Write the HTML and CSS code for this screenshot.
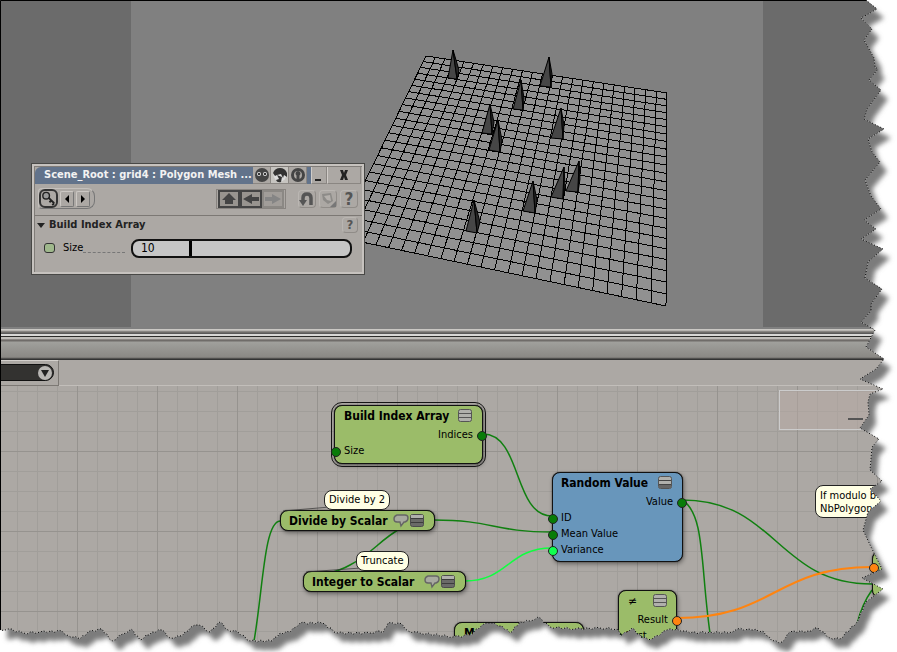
FILE: index.html
```html
<!DOCTYPE html>
<html lang="en">
<head>
<meta charset="utf-8">
<title>Scene_Root : grid4 : Polygon Mesh</title>
<link rel="stylesheet" href="styles.css">
</head>
<body>
<svg width="0" height="0" class="defs" aria-hidden="true">
  <symbol id="list" viewBox="0 0 16 14"><rect x="1.500" y=".5" width="13" height="12" rx="2" fill="#b0b0ac" stroke="#555"/><path d="M2 4.500h12M2 8.500h12" stroke="#555"/></symbol>
  <symbol id="list-dark" viewBox="0 0 16 14"><rect x="1.500" y=".5" width="13" height="12" rx="2" fill="#b0b0ac" stroke="#555"/><path d="M2 9h12v3H2z" fill="#666"/><path d="M2 4.500h12M2 8.500h12" stroke="#444"/></symbol>
  <symbol id="list-half" viewBox="0 0 16 14"><rect x="1.500" y=".5" width="13" height="12" rx="2" fill="#6a6a68" stroke="#4c4c4c"/><path d="M2 1h12v3H2z" fill="#b0b0ac"/><path d="M2 4.500h12M2 8.500h12" stroke="#3c3c3c"/></symbol>
  <symbol id="bubble" viewBox="0 0 16 14"><path d="M4 1h8q3 0 3 3t-3 4h-1l-3 4-1-4H4Q1 8 1 5t3-4z" fill="#a8aaa0" stroke="#666" stroke-width="1.400"/></symbol>
</svg>
<main class="workspace">
  <section class="viewport" aria-label="Camera view">
    <div class="camera"></div>
    <svg class="scene" id="scene" aria-hidden="true"></svg>
    <section class="panel">
      <header class="titlebar">
        <h1>Scene_Root : grid4 : Polygon Mesh ...</h1>
        <button class="tb" aria-label="Focus"><svg viewBox="0 0 18 16"><circle cx="9" cy="8" r="7" fill="#444"/><circle cx="6" cy="7" r="2" fill="#ddd"/><circle cx="12" cy="7" r="2" fill="#ddd"/><circle cx="6" cy="7" r="1"/><circle cx="12" cy="7" r="1"/></svg></button>
        <button class="tb lit" aria-label="Recycle"><svg viewBox="0 0 18 16"><circle cx="9" cy="8" r="6.500" fill="#ddd"/><path d="M2 6Q4 1 9 1q5 0 7 5v4l-3-2-1 3-2-4-4 1-2 1z" fill="#333"/><path d="M6 8l5 2-1 5q-4 1-5-2l3-1z" fill="#333"/></svg></button>
        <button class="tb" aria-label="Lock"><svg viewBox="0 0 18 16"><circle cx="9" cy="8" r="5.500" fill="none" stroke="#444" stroke-width="3"/><path d="M9 4a2.500 2.500 0 0 1 1.500 4.500V12h-3V8.500A2.500 2.500 0 0 1 9 4z" fill="#444"/></svg></button>
        <button class="tb min" aria-label="Minimize"><svg viewBox="0 0 16 16"><path d="M4 12h6v2H4z" fill="#222"/></svg></button>
        <button class="tb close" aria-label="Close"><svg viewBox="0 0 16 16"><path d="M4 3h3l1 3 1-3h3l-2 5 2 5H9l-1-3-1 3H4l2-5z" fill="#222"/></svg></button>
      </header>
      <div class="tools">
        <div class="keys">
          <button class="key" aria-label="Key"><svg viewBox="0 0 18 18"><circle cx="6.500" cy="6" r="3.500" fill="#999" stroke="#222" stroke-width="1.500"/><path d="M9 8l6 6M12 11l-2 2M15 14l-2 2" stroke="#222" stroke-width="2" fill="none"/></svg></button>
          <button class="step" aria-label="Previous key"><svg viewBox="0 0 12 16"><path d="M8 4v8L4 8z"/></svg></button>
          <button class="step" aria-label="Next key"><svg viewBox="0 0 12 16"><path d="M4 4v8l4-4z"/></svg></button>
        </div>
        <div class="nav">
          <button aria-label="Up"><svg viewBox="0 0 18 14"><path d="M9 1l7 7h-3v4H5V8H2z" fill="#444"/></svg></button>
          <button aria-label="Back"><svg viewBox="0 0 18 14"><path d="M1 7l9-5v3h7v4h-7v3z" fill="#444"/></svg></button>
          <button class="off" aria-label="Forward" disabled><svg viewBox="0 0 18 14"><path d="M17 7L8 2v3H1v4h7v3z" fill="#858585"/></svg></button>
        </div>
        <div class="extra">
          <button aria-label="Reload"><svg viewBox="0 0 18 18"><path d="M5 12V8q0-4 4-4t4 4v7" fill="none" stroke="#555" stroke-width="3.500"/><path d="M1 10h8l-4 6z" fill="#555"/></svg></button>
          <button aria-label="Presets"><svg viewBox="0 0 18 18"><path d="M3 4l9-1 2 8-5 3-5-4z" fill="#8d8b88"/><path d="M5 6l6-1 1 6-4-1z" fill="#b4b0ac"/><path d="M17 11v6h-6z" fill="#777"/></svg></button>
          <button class="q" aria-label="Help">?</button>
        </div>
      </div>
      <section class="group">
        <header><h2>Build Index Array</h2><button class="q small" aria-label="Section help">?</button></header>
        <div class="row">
          <input type="checkbox" class="anim" aria-label="Animate size">
          <label for="size">Size</label><span class="leader"></span>
          <div class="slider"><input id="size" type="text" value="10"><input type="range" min="0" max="100" value="0" aria-label="Size slider"></div>
        </div>
      </section>
    </section>
  </section>
  <div class="splitter"></div>
  <div class="toolbar"><div class="picker"><button aria-label="Open list"><svg viewBox="0 0 14 14"><circle cx="7" cy="7" r="7" fill="#b9b7b4"/><path d="M3 4h8l-4 7z" fill="#222"/></svg></button></div></div>
  <section class="graph" aria-label="Node graph">
    <svg class="wires" aria-hidden="true">
      <g transform="translate(0 -386)" fill="none" stroke="#108010" stroke-width="1.500">
        <path d="M483 434C522 434 513 516 552 516"/>
        <path d="M434 520C493 520 493 532 552 532"/>
        <path d="M280 521C264 522 263 590 254 641"/>
        <path d="M434 520C390 522 380 550 350 565C335 574 320 574 303 581"/>
        <path d="M682 500C777 500 777 584 872 584"/>
        <path d="M682 500C706 514 700 570 711 640"/>
        <path d="M872 590Q862 604 857 624"/>
        <path d="M465 581C508 581 508 548 552 548" stroke="#10ff40"/>
        <path d="M677 618C774 618 775 567 872 567" stroke="#ff8410" stroke-width="2"/>
      </g>
    </svg>
    <article class="node selected n-build"><h3>Build Index Array</h3><svg class="ico"><use href="#list"/></svg><p class="out">Indices</p><p class="in">Size</p></article>
    <article class="node slim n-divide"><h3>Divide by Scalar</h3><svg class="ico"><use href="#bubble"/></svg><svg class="ico"><use href="#list-half"/></svg></article>
    <article class="node slim n-int"><h3>Integer to Scalar</h3><svg class="ico"><use href="#bubble"/></svg><svg class="ico"><use href="#list-half"/></svg></article>
    <article class="node blue n-random"><h3>Random Value</h3><svg class="ico"><use href="#list-dark"/></svg><p class="out">Value</p><p class="in">ID</p><p class="in">Mean Value</p><p class="in bright">Variance</p></article>
    <article class="node n-not"><h3 class="sym">≠</h3><svg class="ico"><use href="#list"/></svg><p class="out orange">Result</p><p class="in">First</p></article>
    <article class="node n-mod"><h3>Modulo</h3></article>
    <article class="node n-if"><p class="in orange"></p></article>
    <svg class="wires" aria-hidden="true"><path d="M330 121L283 125M361 182L306 186" stroke="#333" opacity=".7"/></svg>
    <p class="note t-divide">Divide by 2</p>
    <p class="note t-trunc">Truncate</p>
    <p class="note t-if">If modulo b<br>NbPolygon</p>
    <div class="minimap"></div>
  </section>
  <svg class="edge" id="edge" aria-hidden="true">
    <defs><filter id="soft" x="-5%" y="-5%" width="110%" height="110%"><feGaussianBlur stdDeviation="2.500"/></filter><clipPath id="outside"><path id="mask" clip-rule="evenodd"/></clipPath></defs>
    <g clip-path="url(#outside)"><rect width="100%" height="100%" fill="#fff"/><path id="shadow" fill="#7c7c7c" transform="translate(7 9)" filter="url(#soft)"/></g>
    <path id="rim" fill="none" stroke="#000" stroke-dasharray="1 2"/>
    <path d="M.5 630V.5H866" fill="none" stroke="#000"/>
  </svg>
</main>
<script src="scene.js"></script>
</body>
</html>
```
FILE: styles.css
```css
* { box-sizing: border-box; }
body { margin: 0; background: #fff; color: #000; font: 11px/16px "DejaVu Sans Condensed", "DejaVu Sans", sans-serif; }
h1, h2, h3, p { margin: 0; font-size: 12px; line-height: 16px; font-weight: bold; }
button { padding: 0; border: 0; background: none; font: inherit; display: flex; align-items: center; justify-content: center; }
.defs { position: absolute; }
.workspace { position: relative; min-height: 100vh; display: flex; flex-direction: column; overflow: hidden; }
.viewport { position: relative; height: 329px; background: #808080; display: flex; justify-content: center; padding: 0 134px 2px 131px; }
.viewport::before, .viewport::after { content: ""; position: absolute; top: 0; bottom: 2px; width: 131px; background: #6b6b6b; left: 0; }
.viewport::after { left: auto; right: 0; width: 134px; }
.camera { flex: 1; }
.scene, .edge { position: absolute; inset: 0; width: 100%; height: 100%; z-index: 1; }
.edge { z-index: 9; pointer-events: none; }

.panel { position: absolute; z-index: 2; left: 31px; top: 163px; width: 334px; height: 112px; background: #aca8a4; border: 1px solid #484846; padding: 3px 2px 2px; box-shadow: inset 0 0 0 2px #c6c2be, inset 3px 3px 0 #807c78; }
.titlebar { display: flex; height: 17px; margin: 0 1px; background: #62738b; border-radius: 6px 0 0 0; }
.titlebar h1 { flex: 1; padding-left: 9px; font-size: 11px; line-height: 15px; color: #f2f2f2; white-space: nowrap; }
.tb { flex: none; width: 18px; background: #aca8a4; border-right: 1px solid #8a8682; border-bottom: 1px solid #8a8682; }
.tb svg { flex: none; width: 18px; height: 16px; }
.tb.lit { background: #c6c4c0; }
.tb.min { margin-left: 4px; width: 16px; border-left: 1px solid #d0ccc8; }
.tb.close { width: 34px; border-left: 1px solid #d0ccc8; }
.tools { display: flex; align-items: center; height: 32px; padding: 0 4px 2px; border-bottom: 1px solid #7c7874; }
.keys { display: flex; gap: 2px; align-items: center; padding: 0 4px 0 0; border: 1px solid #c4c0bc; border-right-color: #777; border-bottom-color: #777; border-radius: 4px 8px 8px 4px; }
.key { width: 19px; height: 19px; border: 2px solid #333; border-radius: 6px; }
.key svg { flex: none; width: 17px; height: 17px; }
.step { width: 14px; height: 16px; border: 1px solid #ccc8c4; border-right-color: #777; border-bottom-color: #777; border-radius: 2px; }
.step svg { flex: none; width: 12px; height: 16px; }
.nav { display: flex; margin-left: auto; border: 1px solid #888480; padding: 0 1px; }
.nav button { width: 22px; height: 18px; border: 2px solid #444; background: #98948f; }
.nav button.off { border-color: #8b8884; background: #a19d99; }
.nav svg { width: 18px; height: 14px; }
.extra { display: flex; gap: 3px; margin-left: 12px; }
.extra button, .small { width: 18px; height: 18px; border: 1px solid #bab6b2; border-right-color: #908c88; border-bottom-color: #908c88; border-radius: 4px; }
.extra svg { width: 18px; height: 18px; flex: none; }
.extra .q { font-size: 17px; }
.q { font-weight: bold; color: #555; }
.small { width: 16px; height: 16px; font-size: 13px; }
.group header { display: flex; align-items: center; justify-content: space-between; height: 18px; padding: 0 4px 0 3px; }
.group h2 { font-size: 11px; color: #222; display: flex; align-items: center; gap: 4px; }
.group h2::before { content: ""; border: 4px solid transparent; border-top: 5px solid #222; border-bottom: 0; }
.row { display: flex; align-items: center; height: 22px; margin-top: 3px; padding: 0 10px; }
.anim { appearance: none; width: 11px; height: 10px; margin: 0 8px 0 0; border: 1px solid #333; border-radius: 3px; background: #9fb88c; }
.leader { flex: 1; margin: 8px 6px 0 0; border-top: 1px dashed #777; }
.slider { display: flex; width: 221px; height: 19px; border: 2px solid #111; border-radius: 8px; background: #c6c6c6; overflow: hidden; }
.slider [type=text] { width: 56px; border: 0; padding: 0 0 0 8px; background: none; font: inherit; font-size: 12px; }
.slider [type=range] { flex: 1; min-width: 0; margin: 0; appearance: none; background: none; }
.slider [type=range]::-webkit-slider-thumb { appearance: none; width: 3px; height: 19px; background: #000; }

.splitter { height: 31px; background: linear-gradient(#cac8c4 0 1px, #b6b4b0 1px 2px, #888683 2px 3px, #6e6c69 3px 4px, #5a5a5a 4px 5px, #d8d8d6 5px 7px, #2c2c2a 7px 8px, #c0beba 8px 10px, #8a8683 10px 11px, #6f6c69 11px 12px, #a0a09c 13px, #8b8985 28px, #6f6d6a 29px, #333 30px, #333); }
.toolbar { height: 26px; background: #aca8a4; border-bottom: 1px solid #c2beba; }
.picker { width: 59px; height: 26px; border: solid #7c7874; border-width: 0 1px 1px 0; padding-top: 3px; border-top: 1px solid #d4d0cc; }
.picker button { width: 54px; height: 17px; justify-content: flex-end; background: #333230; border: 1px solid #111; border-radius: 0 9px 9px 0; }
.picker svg { width: 14px; height: 14px; margin-right: 1px; }

.graph { position: relative; flex: 1; min-height: 266px; background-color: #aca8a4;
  background-image: linear-gradient(90deg, #96938f 1px, transparent 1px), linear-gradient(#96938f 1px, transparent 1px), linear-gradient(90deg, #a19e9a 1px, transparent 1px), linear-gradient(#a19e9a 1px, transparent 1px);
  background-size: 80px 80px, 80px 80px, 20px 20px, 20px 20px;
  background-position: 77px 0, 0 65px, 17px 0, 0 5px; }
.wires { position: absolute; inset: 0; width: 100%; height: 100%; }
.node { position: absolute; display: flex; flex-wrap: wrap; align-items: center; align-content: flex-start; background: #9bbc69; border: 1px solid #111; border-radius: 8px; padding: 0 9px; box-shadow: 0 0 1px #000, 1px 2px 4px #0006; }
.node h3 { flex: 1; white-space: nowrap; line-height: 20px; }
.ico { width: 16px; height: 14px; flex: none; }
.node p { position: relative; width: 100%; font-size: 11px; font-weight: normal; line-height: 16px; }
.node .out { text-align: right; margin-top: 1px; }
.node .in::before, .node .out::after { content: ""; position: absolute; top: 4px; left: -13px; width: 8px; height: 8px; border: 1px solid #222; border-radius: 50%; background: #087c08; }
.node .out::after { left: auto; right: -14px; }
.node .bright::before { background: #10ff50; }
.node .orange::before, .node .orange::after { background: #ff8410; }
.selected { outline: 1px solid #151515; outline-offset: 2px; }
.blue { background: #6896bb; }
.n-build { left: 334px; top: 19px; width: 149px; height: 59px; }
.n-divide { left: 280px; top: 124px; width: 155px; height: 21px; padding-left: 8px; }
.n-int { left: 303px; top: 185px; width: 163px; height: 21px; padding-left: 8px; }
.n-random { left: 552px; top: 86px; width: 131px; height: 90px; padding-left: 8px; }
.n-not { left: 618px; top: 204px; width: 59px; height: 90px; padding-left: 7px; padding-right: 8px; }
.n-mod { left: 454px; top: 236px; width: 130px; height: 60px; }
.n-if { left: 872px; top: 165px; width: 120px; height: 47px; padding-top: 7px; }
.n-if .in { height: 16px; }
.sym { padding-left: 2px; font-weight: normal; }
.note { position: absolute; border: 1px solid #222; border-radius: 8px; background: #ffffe4; padding: 2px 4px; font-size: 11px; font-weight: normal; line-height: 14px; white-space: nowrap; }
.t-divide { left: 324px; top: 104px; }
.t-trunc { left: 356px; top: 165px; }
.t-if { left: 815px; top: 99px; width: 100px; line-height: 13px; padding-top: 3px; }
.minimap { position: absolute; left: 779px; right: 0; top: 4px; height: 40px; border: 1px solid #ccc; background: #b8aaa480; }
.minimap::after { content: ""; position: absolute; left: 68px; top: 27px; width: 15px; height: 2px; background: #555; }
```
FILE: scene.js
```js
const NS = 'http://www.w3.org/2000/svg';
const scene = document.getElementById('scene');
function draw(d, fill, stroke) {
  const p = document.createElementNS(NS, 'path');
  p.setAttribute('d', d);
  p.setAttribute('fill', fill);
  p.setAttribute('stroke', stroke);
  scene.appendChild(p);
  return p;
}

// Ground plane: perspective map from the unit square to its four corners.
const [x0, y0, x1, y1, x2, y2, x3, y3] = [426, 56, 667, 93, 666, 306, 338, 237];
const N = 24;
const dx1 = x1 - x2, dx2 = x3 - x2, sx = x0 - x1 + x2 - x3;
const dy1 = y1 - y2, dy2 = y3 - y2, sy = y0 - y1 + y2 - y3;
const det = dx1 * dy2 - dx2 * dy1;
const g = (sx * dy2 - dx2 * sy) / det, h = (dx1 * sy - sx * dy1) / det;
const at = (u, v) => {
  const w = g * u + h * v + 1;
  return [((x1 - x0 + g * x1) * u + (x3 - x0 + h * x3) * v + x0) / w,
          ((y1 - y0 + g * y1) * u + (y3 - y0 + h * y3) * v + y0) / w].map(n => n.toFixed(1)).join(' ');
};
draw(`M${at(0, 0)}L${at(1, 0)}L${at(1, 1)}L${at(0, 1)}Z`, '#919191', 'none');
let lines = '';
for (let i = 0; i <= N; i++) {
  const t = i / N;
  lines += `M${at(t, 0)}L${at(t, 1)}M${at(0, t)}L${at(1, t)}`;
}
draw(lines, 'none', '#000').setAttribute('shape-rendering', 'crispEdges');

// Spikes: apex, left base, front base, right base.
[[453,50,448,78,457,79,459,70],[549,57,540,86,551,87,552,74],[521,80,513,109,523,110,524,98],
 [490,104,482,133,492,134,494,122],[498,120,489,150,500,152,502,140],[561,108,551,138,563,139,564,125],
 [579,161,566,191,578,192,580,179],[564,167,551,197,563,199,565,186],[533,181,523,211,535,213,537,200],
 [474,200,466,231,477,233,480,222]].forEach(([a, b, c, d, e, f, i, j]) => {
  draw(`M${a} ${b}L${c} ${d}L${e} ${f}Z`, '#464646', '#000');
  draw(`M${a} ${b}L${e} ${f}L${i} ${j}Z`, '#262626', '#000');
});

// Torn paper edge, clockwise from the top right.
const torn = `866 0 877 9 861 18 872 29 864 40 874 58 875 67 878 69 869 80 881 90 867 109 864 119 884 129
 868 139 872 152 880 162 865 180 871 196 881 209 864 220 876 229 861 239 883 249 868 262 865 278 882 289
 871 304 871 311 861 322 875 330 866 347 884 359 876 369 860 379 883 389 870 394 868 402 869 415 860 428
 879 439 872 447 870 470 882 481 870 489 881 501 868 512 863 530 871 547 882 569 862 578 883 589 866 602
 857 622 840 639 830 638 818 628 808 631 790 632 782 642 772 641 763 631 752 630 737 629 728 633 710 632
 690 633 677 629 667 630 652 639 642 638 632 628 621 636 617 629 600 628 575 629 550 627 538 617 530 621
 520 622 510 633 502 626 490 623 482 625 470 635 453 637 420 633 408 631 402 624 388 623 383 633 377 631
 370 633 337 633 322 623 300 623 290 632 280 633 272 641 250 641 238 632 228 630 220 622 210 632 199 625
 191 627 182 636 170 638 162 630 152 632 140 640 131 629 123 634 112 641 102 629 88 632 80 639 67 635
 62 631 40 632 23 633 8 629 0 630`.trim().split(/\s+/).map(Number);
// Long spans along the bottom are roughened with small alternating notches.
const pts = [];
for (let i = 0; i < torn.length - 2; i += 2) {
  const [ax, ay, bx, by] = torn.slice(i, i + 4);
  const n = Math.max(1, Math.round(Math.hypot(bx - ax, by - ay) / 4));
  for (let k = 0; k < n; k++) {
    const j = k && ay > 600 ? ((i / 2 + k) % 2 ? 1 : -1) : 0;
    pts.push(`${ax + (bx - ax) * k / n} ${ay + (by - ay) * k / n + j}`);
  }
}
pts.push('0 630');
const edgePath = 'M' + pts.join('L');
document.getElementById('rim').setAttribute('d', edgePath);
document.getElementById('shadow').setAttribute('d', edgePath + 'L0 0Z');
document.getElementById('mask').setAttribute('d', edgePath + 'L0 0ZM0 0H4000V3000H0Z');
```
